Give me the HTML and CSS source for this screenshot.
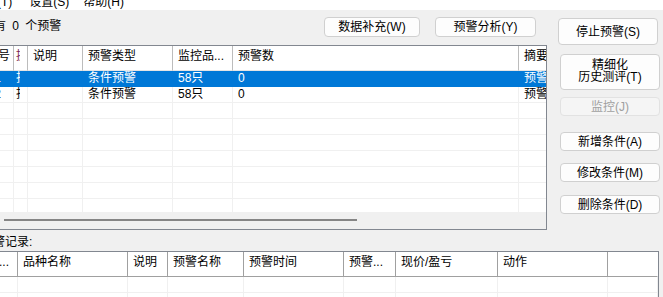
FILE: index.html
```html
<!DOCTYPE html>
<html lang="zh-CN">
  <head>
    <meta charset="UTF-8" />
    <meta name="viewport" content="width=device-width, initial-scale=1.0" />
    <title>条件预警</title>

    <link rel="stylesheet" href="styles.css">
  </head>
  <body>
    <div class="menubar">
      <span class="menu first">工具(T)</span>
      <span class="menu">设置(S)</span>
      <span class="menu">帮助(H)</span>
    </div>

    <div class="upper">
      <div class="leftPane">
        <div class="toolbar">
          <span class="count">共有 0 个预警</span>
          <div class="toolButtons">
            <button class="btn fill">数据补充(W)</button>
            <button class="btn analyse">预警分析(Y)</button>
          </div>
        </div>

        <div class="listBox">
          <div class="row warnGrid head">
            <div class="cell c1">序号</div>
            <div class="cell c2"><span>提醒</span></div>
            <div class="cell">说明</div>
            <div class="cell">预警类型</div>
            <div class="cell">监控品...</div>
            <div class="cell">预警数</div>
            <div class="cell">摘要</div>
          </div>
          <div class="body">
            <div class="row warnGrid selected">
              <div class="cell c1">01</div>
              <div class="cell c2"><span>指</span></div>
              <div class="cell"></div>
              <div class="cell">条件预警</div>
              <div class="cell">58只</div>
              <div class="cell">0</div>
              <div class="cell">预警</div>
            </div>
            <div class="row warnGrid">
              <div class="cell c1">02</div>
              <div class="cell c2"><span>指</span></div>
              <div class="cell"></div>
              <div class="cell">条件预警</div>
              <div class="cell">58只</div>
              <div class="cell">0</div>
              <div class="cell">预警</div>
            </div>
            <div class="row warnGrid empty"><div class="cell"></div><div class="cell"></div><div class="cell"></div><div class="cell"></div><div class="cell"></div><div class="cell"></div><div class="cell"></div></div>
            <div class="row warnGrid empty"><div class="cell"></div><div class="cell"></div><div class="cell"></div><div class="cell"></div><div class="cell"></div><div class="cell"></div><div class="cell"></div></div>
            <div class="row warnGrid empty"><div class="cell"></div><div class="cell"></div><div class="cell"></div><div class="cell"></div><div class="cell"></div><div class="cell"></div><div class="cell"></div></div>
            <div class="row warnGrid empty"><div class="cell"></div><div class="cell"></div><div class="cell"></div><div class="cell"></div><div class="cell"></div><div class="cell"></div><div class="cell"></div></div>
            <div class="row warnGrid empty"><div class="cell"></div><div class="cell"></div><div class="cell"></div><div class="cell"></div><div class="cell"></div><div class="cell"></div><div class="cell"></div></div>
            <div class="row warnGrid empty"><div class="cell"></div><div class="cell"></div><div class="cell"></div><div class="cell"></div><div class="cell"></div><div class="cell"></div><div class="cell"></div></div>
            <div class="row warnGrid empty"><div class="cell"></div><div class="cell"></div><div class="cell"></div><div class="cell"></div><div class="cell"></div><div class="cell"></div><div class="cell"></div></div>
          </div>
          <div class="hscroll"><div class="thumb"></div></div>
        </div>
      </div>

      <div class="sideButtons">
        <button class="btn stop">停止预警(S)</button>
        <button class="btn side history">精细化<br>历史测评(T)</button>
        <button class="btn side monitor" disabled>监控(J)</button>
        <button class="btn side add">新增条件(A)</button>
        <button class="btn side edit">修改条件(M)</button>
        <button class="btn side remove">删除条件(D)</button>
      </div>
    </div>

    <div class="recordLabel"><span>预警记录:</span></div>

    <div class="recordBox">
      <div class="row recordGrid head">
        <div class="cell c1">序...</div>
        <div class="cell">品种名称</div>
        <div class="cell">说明</div>
        <div class="cell">预警名称</div>
        <div class="cell">预警时间</div>
        <div class="cell">预警...</div>
        <div class="cell">现价/盈亏</div>
        <div class="cell">动作</div>
        <div class="cell"></div>
      </div>
      <div class="row recordGrid empty"><div class="cell"></div><div class="cell"></div><div class="cell"></div><div class="cell"></div><div class="cell"></div><div class="cell"></div><div class="cell"></div><div class="cell"></div><div class="cell"></div></div>
      <div class="row recordGrid empty"><div class="cell"></div><div class="cell"></div><div class="cell"></div><div class="cell"></div><div class="cell"></div><div class="cell"></div><div class="cell"></div><div class="cell"></div><div class="cell"></div></div>
    </div>
  </body>
</html>
```

FILE: styles.css
```css
* {
  box-sizing: border-box;
}
html,
body {
  margin: 0;
}
body {
  width: 663px;
  height: 297px;
  overflow: hidden;
  background-color: #f0f0f0;
  font-family: "Liberation Sans", "Noto Sans CJK SC", sans-serif;
  font-size: 12px;
  color: #000;
}

/* menu bar, mostly scrolled off the top */
.menubar {
  height: 10px;
  background-color: #fff;
  display: flex;
  align-items: flex-end;
  overflow: hidden;
}
.menu {
  flex: none;
  line-height: 16px;
  margin-right: 14px;
}
.menu.first {
  margin-left: -27px;
  margin-right: 17px;
}

.upper {
  display: flex;
  height: 220px;
}
.leftPane {
  width: 547px;
  flex: none;
}
.toolbar {
  height: 35px;
  display: flex;
  align-items: flex-start;
}
.count {
  margin-left: -18px;
  padding-top: 8px;
  line-height: 16px;
  word-spacing: 3px;
  white-space: nowrap;
}
.toolButtons {
  margin-left: auto;
  margin-right: 11px;
  margin-top: 7px;
  display: flex;
  gap: 15px;
}

.btn {
  font: inherit;
  color: #000;
  background-color: #fdfdfd;
  border: 1px solid #d0d0d0;
  border-radius: 4px;
  padding: 0;
  height: 20px;
  line-height: 14px;
}
.fill {
  width: 96px;
}
.analyse {
  width: 101px;
}

/* list views */
.listBox {
  width: 547px;
  border-top: 1px solid #828790;
  border-right: 1px solid #828790;
  border-bottom: 1px solid #828790;
  background-color: #fff;
}
.warnGrid {
  display: grid;
  grid-template-columns: 14px 14px 55px 90px 60px 286px 1fr;
}
.recordGrid {
  display: grid;
  grid-template-columns: 18px 110px 40px 76px 100px 52px 102px 110px 1fr;
}
.cell {
  height: 16px;
  line-height: 15px;
  padding-left: 5px;
  white-space: nowrap;
  overflow: hidden;
  border-right: 1px solid #f0f0f0;
  border-bottom: 1px solid #f0f0f0;
}
.head .cell {
  height: 25px;
  line-height: 21px;
  border-right: 1px solid #bcbcbc;
  border-bottom: 1px solid #e5e5e5;
}
.head .cell:last-child {
  border-right-color: #fff;
}
.warnGrid .cell:last-child {
  border-right: none;
}
.c1 {
  display: flex;
  justify-content: flex-end;
  padding-left: 0;
  padding-right: 12px;
}
.head .c1 {
  padding-right: 3px;
}
.c2 {
  padding-left: 2px;
}
.c2 span {
  display: block;
  width: 4px;
  overflow: hidden;
}
.head .c2 span {
  color: #7a1f4f;
}
.selected {
  background-color: #0078d7;
  color: #fff;
}
.selected .cell {
  border-color: #0078d7;
}
.body {
  height: 141px;
  overflow: hidden;
}
.hscroll {
  height: 17px;
  background-color: #f0f0f0;
  padding-top: 7px;
}
.thumb {
  width: 353px;
  height: 2px;
  margin-left: 4px;
  background-color: #858585;
}

/* right column */
.sideButtons {
  width: 116px;
  flex: none;
  display: flex;
  flex-direction: column;
  align-items: flex-start;
}
.stop {
  width: 100px;
  height: 27px;
  margin-left: 11px;
  margin-top: 8px;
}
.side {
  width: 100px;
  height: 19px;
  margin-left: 13px;
}
.history {
  height: 36px;
  margin-top: 9px;
  line-height: 12px;
  padding-bottom: 2px;
}
.monitor {
  margin-top: 7px;
  color: #a0a0a0;
  background-color: #f5f5f5;
  border-color: #e2e2e2;
}
.add {
  margin-top: 16px;
}
.edit {
  margin-top: 12px;
}
.remove {
  margin-top: 13px;
}

.recordLabel {
  height: 21px;
  padding-top: 4px;
  line-height: 16px;
}
.recordLabel span {
  margin-left: -19px;
  white-space: nowrap;
}
.recordBox {
  width: 659px;
  border-top: 1px solid #828790;
  border-right: 1px solid #828790;
  background-color: #fff;
  height: 46px;
}
.recordBox .head .cell {
  border-bottom: 1px solid #a0a0a0;
  border-right-color: #a0a0a0;
}
.recordBox .head .cell:last-child {
  border-right-color: #fff;
}
.recordBox .head .c1 {
  padding-right: 8px;
}
```
